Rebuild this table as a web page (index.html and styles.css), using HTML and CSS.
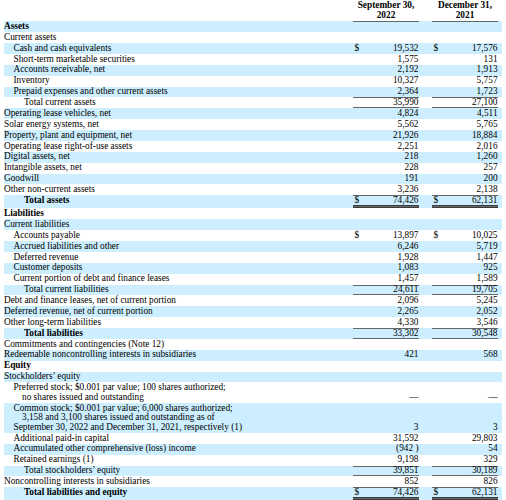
FILE: index.html
```html
<!DOCTYPE html>
<html lang="en">
<head>
<meta charset="utf-8">
<title>Balance Sheet</title>
<link rel="stylesheet" href="styles.css">
</head>
<body>
<table class="bs">
<colgroup>
<col class="c-label"><col class="c-cur"><col class="c-num"><col class="c-gap"><col class="c-cur"><col class="c-num"><col class="c-end">
</colgroup>
<thead>
<tr><th></th><th colspan="2" class="hd">September 30,<br>2022</th><th></th><th colspan="2" class="hd">December 31,<br>2021</th><th></th></tr>
</thead>
<tbody>
<tr><td class="b">Assets</td><td></td><td></td><td></td><td></td><td></td><td></td></tr>
<tr><td>Current assets</td><td></td><td></td><td></td><td></td><td></td><td></td></tr>
<tr><td class="i1">Cash and cash equivalents</td><td class="cur">$</td><td class="num">19,532</td><td></td><td class="cur">$</td><td class="num">17,576</td><td></td></tr>
<tr><td class="i1">Short-term marketable securities</td><td class="cur"></td><td class="num">1,575</td><td></td><td class="cur"></td><td class="num">131</td><td></td></tr>
<tr><td class="i1">Accounts receivable, net</td><td class="cur"></td><td class="num">2,192</td><td></td><td class="cur"></td><td class="num">1,913</td><td></td></tr>
<tr><td class="i1">Inventory</td><td class="cur"></td><td class="num">10,327</td><td></td><td class="cur"></td><td class="num">5,757</td><td></td></tr>
<tr><td class="i1">Prepaid expenses and other current assets</td><td class="cur"></td><td class="num">2,364</td><td></td><td class="cur"></td><td class="num">1,723</td><td></td></tr>
<tr class="tot"><td class="i2">Total current assets</td><td class="cur"></td><td class="num">35,990</td><td></td><td class="cur"></td><td class="num">27,100</td><td></td></tr>
<tr><td>Operating lease vehicles, net</td><td class="cur"></td><td class="num">4,824</td><td></td><td class="cur"></td><td class="num">4,511</td><td></td></tr>
<tr><td>Solar energy systems, net</td><td class="cur"></td><td class="num">5,562</td><td></td><td class="cur"></td><td class="num">5,765</td><td></td></tr>
<tr><td>Property, plant and equipment, net</td><td class="cur"></td><td class="num">21,926</td><td></td><td class="cur"></td><td class="num">18,884</td><td></td></tr>
<tr><td>Operating lease right-of-use assets</td><td class="cur"></td><td class="num">2,251</td><td></td><td class="cur"></td><td class="num">2,016</td><td></td></tr>
<tr><td>Digital assets, net</td><td class="cur"></td><td class="num">218</td><td></td><td class="cur"></td><td class="num">1,260</td><td></td></tr>
<tr><td>Intangible assets, net</td><td class="cur"></td><td class="num">228</td><td></td><td class="cur"></td><td class="num">257</td><td></td></tr>
<tr><td>Goodwill</td><td class="cur"></td><td class="num">191</td><td></td><td class="cur"></td><td class="num">200</td><td></td></tr>
<tr><td>Other non-current assets</td><td class="cur"></td><td class="num">3,236</td><td></td><td class="cur"></td><td class="num">2,138</td><td></td></tr>
<tr class="gtot"><td class="i2 b">Total assets</td><td class="cur">$</td><td class="num">74,426</td><td></td><td class="cur">$</td><td class="num">62,131</td><td></td></tr>
<tr><td class="b">Liabilities</td><td></td><td></td><td></td><td></td><td></td><td></td></tr>
<tr><td>Current liabilities</td><td></td><td></td><td></td><td></td><td></td><td></td></tr>
<tr><td class="i1">Accounts payable</td><td class="cur">$</td><td class="num">13,897</td><td></td><td class="cur">$</td><td class="num">10,025</td><td></td></tr>
<tr><td class="i1">Accrued liabilities and other</td><td class="cur"></td><td class="num">6,246</td><td></td><td class="cur"></td><td class="num">5,719</td><td></td></tr>
<tr><td class="i1">Deferred revenue</td><td class="cur"></td><td class="num">1,928</td><td></td><td class="cur"></td><td class="num">1,447</td><td></td></tr>
<tr><td class="i1">Customer deposits</td><td class="cur"></td><td class="num">1,083</td><td></td><td class="cur"></td><td class="num">925</td><td></td></tr>
<tr><td class="i1">Current portion of debt and finance leases</td><td class="cur"></td><td class="num">1,457</td><td></td><td class="cur"></td><td class="num">1,589</td><td></td></tr>
<tr class="tot"><td class="i2">Total current liabilities</td><td class="cur"></td><td class="num">24,611</td><td></td><td class="cur"></td><td class="num">19,705</td><td></td></tr>
<tr><td>Debt and finance leases, net of current portion</td><td class="cur"></td><td class="num">2,096</td><td></td><td class="cur"></td><td class="num">5,245</td><td></td></tr>
<tr><td>Deferred revenue, net of current portion</td><td class="cur"></td><td class="num">2,265</td><td></td><td class="cur"></td><td class="num">2,052</td><td></td></tr>
<tr><td>Other long-term liabilities</td><td class="cur"></td><td class="num">4,330</td><td></td><td class="cur"></td><td class="num">3,546</td><td></td></tr>
<tr class="tot"><td class="i2 b">Total liabilities</td><td class="cur"></td><td class="num">33,302</td><td></td><td class="cur"></td><td class="num">30,548</td><td></td></tr>
<tr><td>Commitments and contingencies (Note 12)</td><td></td><td></td><td></td><td></td><td></td><td></td></tr>
<tr><td>Redeemable noncontrolling interests in subsidiaries</td><td class="cur"></td><td class="num">421</td><td></td><td class="cur"></td><td class="num">568</td><td></td></tr>
<tr><td class="b">Equity</td><td></td><td></td><td></td><td></td><td></td><td></td></tr>
<tr><td>Stockholders’ equity</td><td></td><td></td><td></td><td></td><td></td><td></td></tr>
<tr><td class="i1"><div>Preferred stock; $0.001 par value; 100 shares authorized;</div><div class="cont">no shares issued and outstanding</div></td><td class="cur"></td><td class="num">—</td><td></td><td class="cur"></td><td class="num">—</td><td></td></tr>
<tr><td class="i1"><div>Common stock; $0.001 par value; 6,000 shares authorized;</div><div class="cont">3,158 and 3,100 shares issued and outstanding as of</div><div>September 30, 2022 and December 31, 2021, respectively (1)</div></td><td class="cur"></td><td class="num">3</td><td></td><td class="cur"></td><td class="num">3</td><td></td></tr>
<tr><td class="i1">Additional paid-in capital</td><td class="cur"></td><td class="num">31,592</td><td></td><td class="cur"></td><td class="num">29,803</td><td></td></tr>
<tr><td class="i1">Accumulated other comprehensive (loss) income</td><td class="cur"></td><td class="num">(942 )</td><td></td><td class="cur"></td><td class="num">54</td><td></td></tr>
<tr><td class="i1">Retained earnings (1)</td><td class="cur"></td><td class="num">9,198</td><td></td><td class="cur"></td><td class="num">329</td><td></td></tr>
<tr class="tot"><td class="i2">Total stockholders’ equity</td><td class="cur"></td><td class="num">39,851</td><td></td><td class="cur"></td><td class="num">30,189</td><td></td></tr>
<tr><td>Noncontrolling interests in subsidiaries</td><td class="cur"></td><td class="num">852</td><td></td><td class="cur"></td><td class="num">826</td><td></td></tr>
<tr class="gtot"><td class="i2 b">Total liabilities and equity</td><td class="cur">$</td><td class="num">74,426</td><td></td><td class="cur">$</td><td class="num">62,131</td><td></td></tr>
</tbody>
</table>
</body>
</html>
```
FILE: styles.css
```css
html, body {
  margin: 0;
  padding: 0;
  background: #ffffff;
}
body {
  font-family: "Liberation Serif", "Times New Roman", serif;
  font-size: 9.3px;
  color: #000000;
}
.bs {
  border-collapse: collapse;
  table-layout: fixed;
  width: 498px;
  margin: 0 4px;
}
.c-label { width: 349px; }
.c-cur { width: 9px; }
.c-num { width: 57px; }
.c-gap { width: 13px; }
.c-end { width: 4px; }
.bs td, .bs th {
  padding: 0.65px 0;
  line-height: 9.6px;
  vertical-align: bottom;
  white-space: nowrap;
  text-align: left;
}
.bs th.hd {
  font-weight: bold;
  text-align: center;
  line-height: 9.3px;
  padding: 1.3px 0 0.9px;
  border-bottom: 1px solid #666666;
}
.bs tbody tr:nth-child(odd) {
  background: #cceeff;
}
.b { font-weight: bold; }
.bs td.i1 { padding-left: 9.5px; }
.bs td.i2 { padding-left: 20px; }
.cont { padding-left: 8.5px; }
.bs td.cur { padding-left: 1.5px; }
.bs td.num { text-align: right; padding-right: 0.5px; }
.tot td.cur, .tot td.num {
  background-image:
    linear-gradient(#666666, #666666),
    linear-gradient(#666666, #666666);
  background-size: 100% 1px, 100% 1px;
  background-position: left top, left bottom;
  background-repeat: no-repeat;
}
.bs .gtot td {
  padding-bottom: 2.9px;
}
.gtot td.cur, .gtot td.num {
  background-image:
    linear-gradient(#666666, #666666),
    linear-gradient(#3a3a3a 0 1px, #6a6a6a 1px 2px, #3a3a3a 2px 3px);
  background-size: 100% 1px, 100% 3px;
  background-position: left top, left bottom;
  background-repeat: no-repeat;
}
```
